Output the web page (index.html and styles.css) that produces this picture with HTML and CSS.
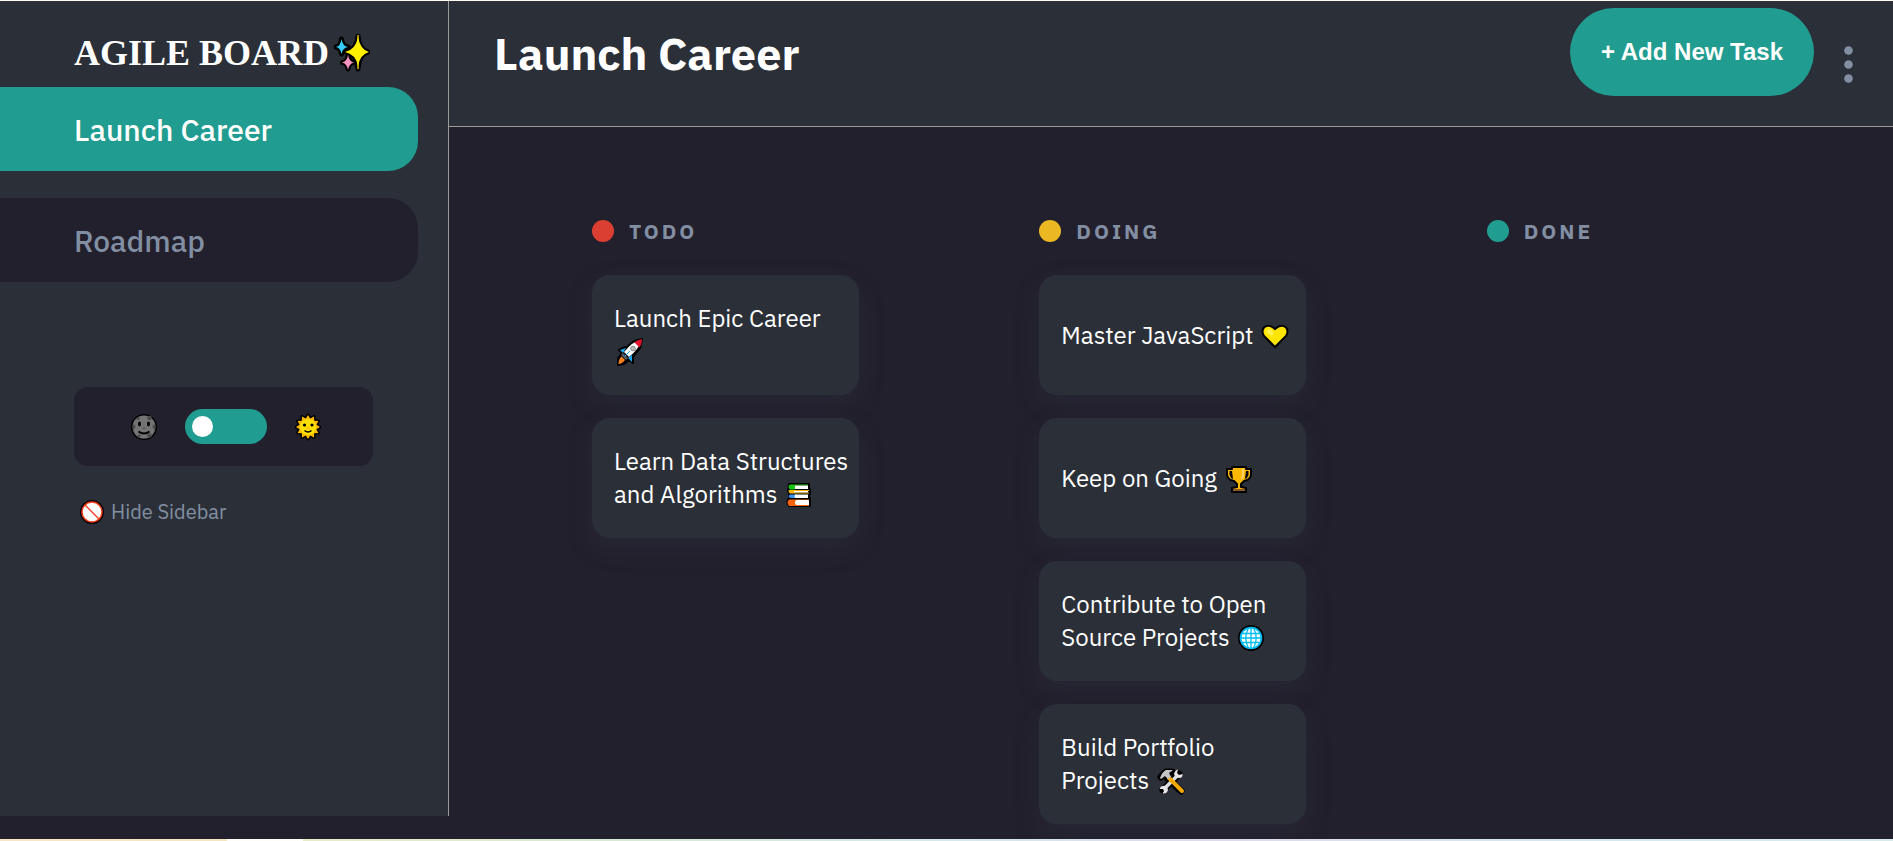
FILE: index.html
```html
<!DOCTYPE html>
<html lang="en">
<head>
<meta charset="utf-8">
<title>Agile Board</title>
<link rel="stylesheet" href="styles.css">
</head>
<body>
<div class="app">
  <aside class="sidebar">
    <div class="logo"><span>AGILE BOARD</span>
      <svg class="logo-icon" viewBox="0 0 36 38" aria-hidden="true">
        <g stroke="#000" stroke-width="5" stroke-linejoin="round">
          <path d="M24 2Q25 16 34 18Q25 20 24 35Q23 20 12 18Q23 16 24 2Z"/>
          <path d="M7.500 5Q8 12 14 13Q8 14 7.500 20Q7 14 2 13Q7 12 7.500 5Z"/>
          <path d="M14 22Q14.500 28 19.500 28.500Q14.500 29 14 35Q13.500 29 8.500 28.500Q13.500 28 14 22Z"/>
        </g>
        <path fill="#a89200" d="M23 1h2v34h-2z"/>
        <path fill="#fff100" d="M24 3Q26.500 16 35 18Q26.500 20 24 32Q21.500 20 11 18Q21.500 16 24 3Z"/>
        <path fill="#35cdf8" d="M7.500 5Q8.500 12 14 13Q8.500 14 7.500 20Q6.500 14 2 13Q6.500 12 7.500 5Z"/>
        <path fill="#f894c2" d="M14 21Q15 27.500 20 28.500Q15 29.500 14 36Q13 29.500 8 28.500Q13 27.500 14 21Z"/>
      </svg>
    </div>
    <nav class="boards">
      <button class="board-btn active" type="button">Launch Career</button>
      <button class="board-btn" type="button">Roadmap</button>
    </nav>
    <div class="theme-box">
      <svg class="theme-icon" viewBox="0 0 26 28" aria-hidden="true">
        <circle cx="13" cy="14" r="13" fill="#000"/>
        <circle cx="13" cy="14" r="11.500" fill="#747474"/>
        <g fill="#4c4c4c"><circle cx="7" cy="5.500" r="1.500"/><circle cx="18.500" cy="5" r="2.300"/><path d="M2 11q3 1 2.500 3t-2.500 3zM24 11q-3 1-2.500 3t2.500 3z"/><circle cx="8" cy="23" r="1.700"/><circle cx="18.500" cy="22.500" r="2.300"/></g>
        <g fill="#000"><ellipse cx="8.500" cy="11" rx="1.500" ry="2.400"/><ellipse cx="17.500" cy="11" rx="1.500" ry="2.400"/></g>
        <path d="M11.500 15h3" stroke="#444" fill="none"/>
        <path d="M7.500 18.500q5.500 4 11 0" stroke="#000" stroke-width="1.800" fill="none"/>
      </svg>
      <label class="switch"><input type="checkbox" aria-label="Toggle light theme"><span class="knob"></span></label>
      <svg class="theme-icon" viewBox="0 0 26 28" aria-hidden="true">
        <path d="M13 2L15.200 5.600L19 3.600L19.200 7.800L23.400 8L21.400 11.800L25 14L21.400 16.200L23.400 20L19.200 20.200L19 24.400L15.200 22.400L13 26L10.800 22.400L7 24.400L6.800 20.200L2.600 20L4.600 16.200L1 14L4.600 11.800L2.600 8L6.800 7.800L7 3.600L10.800 5.600Z" fill="#fdb900" stroke="#000" stroke-width="3" stroke-linejoin="round" paint-order="stroke"/>
        <circle cx="13" cy="14" r="8" fill="#ffe000"/>
        <circle cx="9.500" cy="12" r="1.600"/><circle cx="17" cy="12" r="1.600"/>
        <path d="M11.500 15h3" stroke="#fdb900" stroke-width="1.500" fill="none"/>
        <path d="M9.500 17.500q3.500 3 7 0" stroke="#000" stroke-width="1.500" fill="none"/>
      </svg>
    </div>
    <button class="hide-btn" type="button">
      <svg class="hide-icon" viewBox="0 0 24 24" aria-hidden="true">
        <circle cx="12" cy="12" r="12" fill="#000"/>
        <circle cx="12" cy="12" r="10" fill="#fff" stroke="#f03a17" stroke-width="1.500"/>
        <path d="M5 5l14 14" stroke="#f03a17" stroke-width="1.300"/>
      </svg>
      <span>Hide Sidebar</span>
    </button>
  </aside>
  <div class="content">
    <header class="header">
      <h1 class="title">Launch Career</h1>
      <div class="actions">
        <button class="add-btn" type="button">+ Add New Task</button>
        <button class="more-btn" type="button" aria-label="Board options">
          <svg class="more-icon" viewBox="0 0 9 37" fill="#828fa3" aria-hidden="true"><circle cx="4.500" cy="4.500" r="4.300"/><circle cx="4.500" cy="18.500" r="4.300"/><circle cx="4.500" cy="32.500" r="4.300"/></svg>
        </button>
      </div>
    </header>
    <main class="columns">
      <section class="column">
        <h2 class="column-head"><span class="dot todo"></span>TODO</h2>
        <article class="card"><p class="card-text">Launch Epic Career
          <svg class="emoji" viewBox="0 0 28 28" aria-hidden="true">
            <path d="M26 1L24 10L17 19V25L13 22L8 26L2 27L2 20L6 15L3 12L9 9H11L18 3Z" fill="#000" stroke="#000" stroke-width="2" stroke-linejoin="round"/>
            <path fill="#1ba8f0" d="M10 10L4 12L7 15ZM12 20L16 24V17Z"/>
            <path fill="#fff" d="M25 2Q24 10 13 19L8 14Q17 3 25 2Z"/>
            <path fill="#e8112d" d="M26 1Q26 6 23.500 9.500L18.500 4.500Q21 2 26 1Z"/>
            <path fill="#505860" d="M7 15l5 5-2 2-5-5z"/>
            <path fill="#f7801a" d="M5.500 18.500L9 22Q6 26 2.500 26Q2.500 21 5.500 18.500Z"/>
            <circle cx="17" cy="10.500" r="2.300" fill="#bbb" stroke="#888"/>
            <path d="M9 18l5-5" stroke="#1ba8f0"/>
          </svg></p></article>
        <article class="card"><p class="card-text">Learn Data Structures and Algorithms
          <svg class="emoji" viewBox="0 0 28 28" aria-hidden="true">
            <path d="M4 3h20v5h1v5l-1 1v3h1v8H4q-3-4 0-8v-4l-1-3Z" fill="#000" stroke="#000" stroke-width="2" stroke-linejoin="round"/>
            <path fill="#16c60c" d="M5 3.500h18v1H10v4H5q-3-2.500 0-5z"/>
            <path fill="#fff" d="M10 4.500h13v3.500H10z"/>
            <path fill="#f7b500" d="M4 9h20v1H10v1.500h14v1H5q-2.500-2-1-3.500z"/>
            <path fill="#fff" d="M9 10h14v1.500H9z"/>
            <path fill="#3b8eea" d="M5 13.500h7v3.500H5q-3-1.500 0-3.500z"/>
            <path fill="#fff" d="M10 13.500h13v3.500H10q-1-1.500 0-3.500z"/>
            <path fill="#f7630c" d="M4 18.500h20v1H11v4.500h13v1H4q-3-3.500 0-6.500z"/>
            <path fill="#fff" d="M11 19h13v5H11q-2-2.500 0-5z"/>
          </svg></p></article>
      </section>
      <section class="column">
        <h2 class="column-head"><span class="dot doing"></span>DOING</h2>
        <article class="card"><p class="card-text">Master JavaScript
          <svg class="emoji" viewBox="0 0 28 28" aria-hidden="true">
            <path d="M14 25L3 14Q0 9 3 5.500Q8 1.500 14 7Q20 1.500 25 5.500Q28 9 25 14Z" fill="#ffe500" stroke="#000" stroke-width="2"/>
            <path d="M5 10q1-3 4-3l4 4-2 3z" fill="#fff14f"/>
          </svg></p></article>
        <article class="card"><p class="card-text">Keep on Going
          <svg class="emoji" viewBox="0 0 28 28" aria-hidden="true">
            <path d="M7 2H21V4H26V10Q25 15 19 16L16 19V22L21 23V27H7V23L12 22V19L9 16Q3 15 2 10V4H7Z" fill="#fdb900" stroke="#000" stroke-width="2" stroke-linejoin="round"/>
            <path d="M4.500 6v4q1 3 3.500 4L7 6zM23.500 6v4q-1 3-3.500 4L21 6z" fill="#000"/>
            <path d="M8 24h12v2H8z" fill="#8e562e"/><path d="M17 4h2v7q-1 3-3 4 2-5 1-11z" fill="#ffd76b"/>
          </svg></p></article>
        <article class="card"><p class="card-text">Contribute to Open Source Projects
          <svg class="emoji" viewBox="0 0 28 28" aria-hidden="true">
            <circle cx="14" cy="14" r="13"/><circle cx="14" cy="14" r="11.300" fill="#00bcf2"/>
            <circle cx="14" cy="14" r="9.500" fill="#fff"/>
            <g fill="none" stroke="#00bcf2" stroke-width="1.300"><path d="M14 4V24M4 14H24M5 9.500H23M5 18.500H23M11.500 4Q6 14 11.500 24M16.500 4Q22 14 16.500 24"/></g>
          </svg></p></article>
        <article class="card"><p class="card-text">Build Portfolio Projects
          <svg class="emoji" viewBox="0 0 28 28" aria-hidden="true">
            <g fill="none" stroke="#000" stroke-width="7" stroke-linecap="round" stroke-linejoin="round"><path d="M6 23L22 7M8 9L24 24M4 10L9 5H15"/></g>
            <path d="M7 22L21 8" stroke="#ddd" stroke-width="3.500"/>
            <path d="M21 2.500L20 6L22 8L25.500 7Q26 10 23 11Q18 11 17 7Q18 3 21 2.500ZM3 22L6 22L7 24L5.500 26.500Q10 27 11 23Q10 18 6 19Q3 19 3 22Z" fill="#e6e6e6"/>
            <path d="M12 11L25 24" stroke="#f2a600" stroke-width="4" stroke-linecap="round"/>
            <path d="M3 11Q5 5 9 3H16L12 6L14 10L11 12L8 9L4 12Z" fill="#c5c5c5"/>
          </svg></p></article>
      </section>
      <section class="column">
        <h2 class="column-head"><span class="dot done"></span>DONE</h2>
      </section>
    </main>
  </div>
</div>
<div class="rainbow"></div>
</body>
</html>
```
FILE: styles.css
```css
* { box-sizing: border-box; }

body {
  margin: 0;
  min-height: 100vh;
  background: #22202c;
  border-top: 1px solid #fdfdf0;
  display: flex;
  flex-direction: column;
  font-family: "IBM Plex Sans", "Noto Sans", sans-serif;
  color: #fff;
}
button { border: 0; margin: 0; cursor: pointer; font-family: inherit; }
h1, h2, p { margin: 0; }
svg { display: block; flex: none; }

.app { flex: 1; display: flex; min-width: 0; }

.rainbow {
  height: 2px;
  background: linear-gradient(to right, #f8e6c8 0%, #f3e6c0 12%, #fffdf8 12%, #fffdf8 16%, #e8ebc8 16%, #d8e8d4 32%, #d6e8ea 50%, #dddaea 64%, #d5e8ee 85%, #d8eaea 100%);
}

.sidebar {
  flex: 0 0 449px;
  margin-bottom: 23px;
  padding-top: 22px;
  background: #2b2f37;
  border-right: 1px solid #979c99;
}
.logo {
  display: flex;
  align-items: center;
  gap: 5px;
  height: 60px;
  margin-bottom: 4px;
  padding-left: 74px;
  font: bold 36px/40px "Liberation Serif", serif;
}
.logo-icon { width: 36px; height: 38px; }

.boards { display: flex; flex-direction: column; gap: 27px; padding-right: 30px; }
.board-btn {
  height: 84px;
  padding: 0 0 0 74px;
  border-radius: 0 30px 30px 0;
  background: #22202c;
  color: #828fa3;
  font-size: 30px;
  font-weight: 500;
  text-align: left;
}
.board-btn.active { background: #219c90; color: #fff; }

.theme-box {
  display: flex;
  align-items: center;
  justify-content: center;
  gap: 28px;
  height: 79px;
  margin: 105px 75px 0 74px;
  padding-left: 5px;
  border-radius: 14px;
  background: #22202c;
}
.theme-icon { width: 26px; height: 28px; }
.switch {
  display: flex;
  align-items: center;
  width: 82px;
  height: 35px;
  padding-left: 7px;
  border-radius: 18px;
  background: #219c90;
  cursor: pointer;
}
.switch input { position: absolute; opacity: 0; }
.knob { width: 21px; height: 21px; border-radius: 50%; background: #fff; }

.hide-btn {
  display: flex;
  align-items: center;
  gap: 7px;
  margin: 32px 0 0 80px;
  padding: 0;
  background: none;
  color: #828fa3;
  font-size: 20px;
  line-height: 28px;
}
.hide-icon { width: 24px; height: 24px; }

.content { flex: 1; min-width: 0; }
.header {
  display: flex;
  justify-content: space-between;
  height: 126px;
  padding: 7px 40px 0 45px;
  background: #2b2f37;
  border-bottom: 1px solid #979c99;
}
.title { padding-top: 13px; font-size: 45px; line-height: 64px; font-weight: 700; }
.actions { display: flex; gap: 30px; }
.add-btn {
  height: 88px;
  padding: 0 31px;
  border-radius: 44px;
  background: #219c90;
  color: #fff;
  font: bold 24px "Liberation Sans", sans-serif;
}
.more-btn { align-self: flex-start; margin-top: 38px; padding: 0; background: none; }
.more-icon { width: 9px; height: 37px; }

.columns {
  display: grid;
  grid-template-columns: repeat(3, 1fr);
  column-gap: 41px;
  padding: 89px 0 14px 143px;
}
.column { display: flex; flex-direction: column; gap: 23px; }
.column-head {
  display: flex;
  align-items: center;
  gap: 15px;
  height: 36px;
  padding-bottom: 6px;
  color: #828fa3;
  font-size: 21px;
  letter-spacing: 3px;
}
.dot { width: 22px; height: 22px; border-radius: 50%; }
.todo { background: #db3f31; }
.doing { background: #ebb824; }
.done { background: #219c90; }

.card {
  display: flex;
  align-items: center;
  width: 267px;
  min-height: 120px;
  padding: 0 4px 0 22px;
  border-radius: 18px;
  background: #2b2f37;
  box-shadow: 0 10px 25px rgba(54, 60, 78, 0.25);
}
.card-text { font-size: 24px; line-height: 33px; }
.emoji { display: inline-block; width: 28px; height: 28px; margin-left: 2px; vertical-align: -6px; }
```
